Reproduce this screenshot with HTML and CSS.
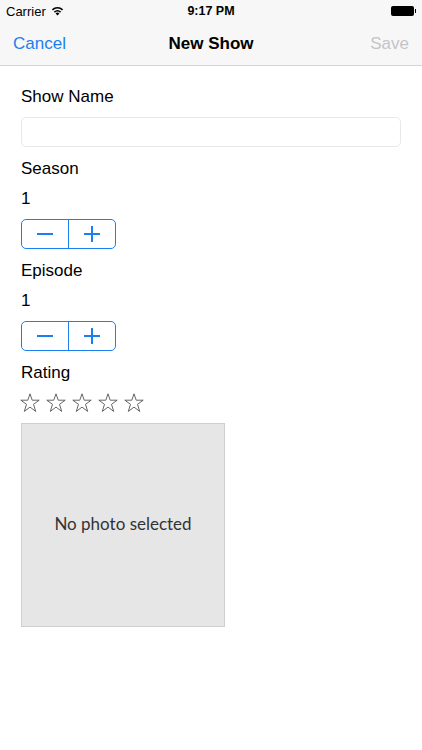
FILE: index.html
```html
<!DOCTYPE html>
<html>
<head>
<meta charset="utf-8">
<link rel="stylesheet" href="styles.css">
</head>
<body>
<div class="top">
  <div class="status">
    <div class="carrier">Carrier
      <svg class="wifi" width="13" height="10" viewBox="0 0 13 10">
        <path d="M6.5 9.5 L4.6 7.4 A2.8 2.8 0 0 1 8.4 7.4 Z" fill="#000"/>
        <path d="M3.4 6.1 A4.6 4.6 0 0 1 9.6 6.1" stroke="#000" stroke-width="1.5" fill="none"/>
        <path d="M1.4 3.9 A7.4 7.4 0 0 1 11.6 3.9" stroke="#000" stroke-width="1.5" fill="none"/>
      </svg>
    </div>
    <div class="time">9:17 PM</div>
    <div class="battery"><span class="cell"></span><span class="tip"></span></div>
  </div>
  <div class="nav">
    <span class="cancel">Cancel</span>
    <span class="title">New Show</span>
    <span class="save">Save</span>
  </div>
</div>
<div class="form">
  <div class="label">Show Name</div>
  <div class="input"></div>
  <div class="label gap">Season</div>
  <div class="label">1</div>
  <div class="stepper">
    <span class="seg"><span class="minus"></span></span>
    <span class="seg"><span class="plus"></span></span>
  </div>
  <div class="label gap">Episode</div>
  <div class="label">1</div>
  <div class="stepper">
    <span class="seg"><span class="minus"></span></span>
    <span class="seg"><span class="plus"></span></span>
  </div>
  <div class="label gap">Rating</div>
  <div class="stars">
    <svg class="star" width="20" height="20" viewBox="0 0 20 20"><polygon points="10,0.8 12.2,7.2 19.2,7.2 13.5,11.3 15.7,18.4 10,14.1 4.3,18.4 6.5,11.3 0.8,7.2 7.8,7.2" fill="none" stroke="#555" stroke-width="0.9"/></svg>
    <svg class="star" width="20" height="20" viewBox="0 0 20 20"><polygon points="10,0.8 12.2,7.2 19.2,7.2 13.5,11.3 15.7,18.4 10,14.1 4.3,18.4 6.5,11.3 0.8,7.2 7.8,7.2" fill="none" stroke="#555" stroke-width="0.9"/></svg>
    <svg class="star" width="20" height="20" viewBox="0 0 20 20"><polygon points="10,0.8 12.2,7.2 19.2,7.2 13.5,11.3 15.7,18.4 10,14.1 4.3,18.4 6.5,11.3 0.8,7.2 7.8,7.2" fill="none" stroke="#555" stroke-width="0.9"/></svg>
    <svg class="star" width="20" height="20" viewBox="0 0 20 20"><polygon points="10,0.8 12.2,7.2 19.2,7.2 13.5,11.3 15.7,18.4 10,14.1 4.3,18.4 6.5,11.3 0.8,7.2 7.8,7.2" fill="none" stroke="#555" stroke-width="0.9"/></svg>
    <svg class="star" width="20" height="20" viewBox="0 0 20 20"><polygon points="10,0.8 12.2,7.2 19.2,7.2 13.5,11.3 15.7,18.4 10,14.1 4.3,18.4 6.5,11.3 0.8,7.2 7.8,7.2" fill="none" stroke="#555" stroke-width="0.9"/></svg>
  </div>
  <div class="photo">No photo selected</div>
</div>
</body>
</html>
```
FILE: styles.css
```css
html, body {
  margin: 0;
  padding: 0;
  background: #fff;
  font-family: "Liberation Sans", Arial, sans-serif;
  color: #000;
}
.top {
  background: #f7f7f7;
  border-bottom: 1px solid #d4d4d4;
  height: 66px;
  box-sizing: border-box;
}
.status {
  height: 20px;
  display: flex;
  align-items: center;
  justify-content: space-between;
  padding: 2px 6px 0;
  box-sizing: border-box;
  font-size: 13px;
}
.carrier {
  display: flex;
  align-items: center;
  gap: 5px;
  width: 100px;
}
.wifi { margin-top: -1px; }
.time {
  font-weight: bold;
  font-size: 12.5px;
}
.battery {
  width: 100px;
  display: flex;
  justify-content: flex-end;
  align-items: center;
}
.cell {
  width: 23px;
  height: 10px;
  background: #000;
  border-radius: 2px;
}
.tip {
  width: 1.5px;
  height: 4px;
  background: #000;
  margin-left: 1px;
}
.nav {
  height: 45px;
  display: flex;
  align-items: center;
  justify-content: space-between;
  padding: 2px 13px 0;
  box-sizing: border-box;
  font-size: 17px;
}
.cancel { color: #1b7ff0; width: 70px; }
.title { font-weight: bold; }
.save { color: #c4c4c8; width: 70px; text-align: right; }
.form {
  display: flex;
  flex-direction: column;
  align-items: flex-start;
  gap: 10px;
  padding: 21px 21px 0;
}
.label {
  font-size: 17px;
  line-height: 20px;
  height: 20px;
}
.gap { margin-top: 2px; }
.input {
  align-self: stretch;
  height: 30px;
  box-sizing: border-box;
  border: 1px solid #e8e8e8;
  border-radius: 5px;
}
.stepper {
  display: flex;
  width: 95px;
  height: 30px;
  box-sizing: border-box;
  border: 1px solid #1b7ff0;
  border-radius: 5px;
}
.seg {
  flex: 1;
  display: flex;
  align-items: center;
  justify-content: center;
}
.seg + .seg { border-left: 1px solid #1b7ff0; }
.minus, .plus {
  width: 16px;
  height: 16px;
  position: relative;
}
.minus::before, .plus::before, .plus::after {
  content: "";
  position: absolute;
  background: #1b7ff0;
}
.minus::before, .plus::before {
  left: 0; right: 0; top: 7px; height: 2px;
}
.plus::after {
  top: 0; bottom: 0; left: 7px; width: 2px;
}
.stars {
  display: flex;
  gap: 6px;
  height: 20px;
  margin-left: -1px;
}
.photo {
  width: 204px;
  height: 204px;
  box-sizing: border-box;
  background: #e6e6e6;
  border: 1px solid #cfcfcf;
  display: flex;
  align-items: center;
  justify-content: center;
  font-family: Lato, "Open Sans", sans-serif;
  font-size: 17px;
  color: #333;
  padding-bottom: 4px;
}
```
